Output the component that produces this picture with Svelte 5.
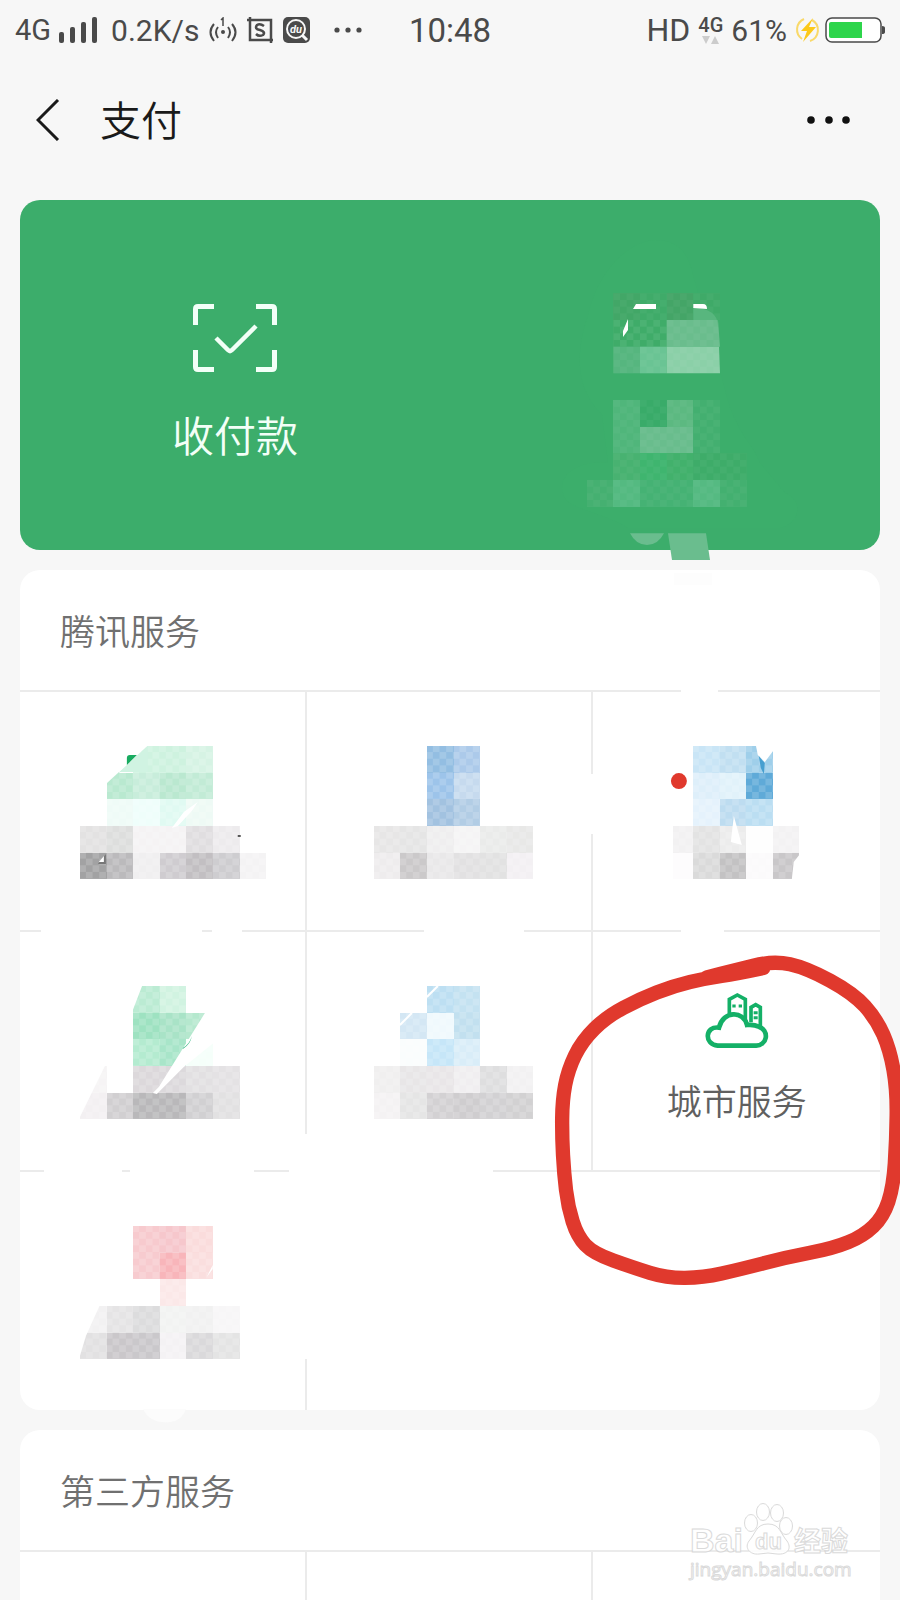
<script>
  // side of one mosaic block
  const unit = 80 / 3;

  // each block is [column, row, colour]
  const heroBlocks = [
    [23, 11, '#42a767'], [24, 11, '#3fab69'], [25, 11, '#44a567'], [26, 11, '#3faa68'],
    [23, 12, '#3fac69'], [24, 12, '#3fac69'],
    [23, 15, '#50b67b'], [24, 15, '#39ab69'], [25, 15, '#5cb981'], [26, 15, '#43af70'],
    [23, 16, '#50b67b'], [24, 16, '#69bd8d'], [25, 16, '#69bd8d'], [26, 16, '#43af70'],
    [23, 17, '#48b271'], [24, 17, '#3fb56f'], [25, 17, '#42b16c'], [26, 17, '#3eac69'], [27, 17, '#3eac69'],
    [22, 18, '#45b071'], [23, 18, '#54ba81'], [24, 18, '#45b274'], [25, 18, '#45b274'], [26, 18, '#55ba82'], [27, 18, '#43b070']
  ];

  const tiles = [
    {
      x: 60,
      blocks: [
        [2, 0, '#cff3e0'], [3, 0, '#cef2df'], [4, 0, '#d6f3e4'],
        [1, 1, '#b9e9d0'], [2, 1, '#c8eddb'], [3, 1, '#bae8d0'], [4, 1, '#c2ebd6'],
        [1, 2, '#effbf7'], [2, 2, '#effefb'], [3, 2, '#e0faf2'], [4, 2, '#eefaf5'],
        [0, 3, '#e3e2e2'], [1, 3, '#dddedd'], [2, 3, '#f5f3f4'], [3, 3, '#f5f3f4'], [4, 3, '#e0dee0'], [5, 3, '#edebed'],
        [0, 4, '#a2a2a3'], [1, 4, '#bbbabc'], [2, 4, '#f0eff0'], [3, 4, '#cfccd0'], [4, 4, '#c2bfc2'], [5, 4, '#cecdd0'], [6, 4, '#f4f3f4']
      ],
      shapes: [
        { d: 'M128 56V82H87V93L128 56Z', fill: '#d0f3e2' },
        { d: 'M87 93V82H100Z', fill: '#b9e9d0' },
        { d: 'M84 50H134L86 94Z', fill: '#fff' },
        { d: 'M107 68Q107 65 110 65H117L107 75Z', fill: '#18ab60' },
        { d: 'M178 112L164 122L152 138L158 136L172 121Z', fill: '#fff' },
        { d: 'M78 174L86 164V174Z', fill: '#777' },
        { d: 'M79 172L84 166V172Z', fill: '#fff' },
        { d: 'M218 145H221V147H218Z', fill: '#555' }
      ]
    },
    {
      x: 66.67,
      blocks: [
        [2, 0, '#93bee2'], [3, 0, '#accaea'], [2, 1, '#9dc4ea'], [3, 1, '#c6daee'], [2, 2, '#a2c2e0'], [3, 2, '#b2cde5'],
        [0, 3, '#e7e6e6'], [1, 3, '#e5e5e5'], [2, 3, '#efeeef'], [3, 3, '#f5f4f5'], [4, 3, '#eaebea'], [5, 3, '#e8e8e7'],
        [0, 4, '#eeeced'], [1, 4, '#cbc9ca'], [2, 4, '#e9e8e9'], [3, 4, '#e2e1e2'], [4, 4, '#e2e2e2'], [5, 4, '#f3f0f3']
      ],
      shapes: []
    },
    {
      x: 80,
      blocks: [
        [0.75, 0, '#c9e5f6'], [1.75, 0, '#c1dff1'], [2.75, 0, '#9fcfea'],
        [0.75, 1, '#deeffa'], [1.75, 1, '#e1f2fa'], [2.75, 1, '#5faad8'],
        [0.75, 2, '#e5f2fc'], [1.75, 2, '#bddcf0'], [2.75, 2, '#bbdef2'],
        [0, 3, '#f2f1f2'], [0.75, 3, '#e3e3e3'], [1.75, 3, '#ececec'], [2.75, 3, '#fefefe'], [3.75, 3, '#f3f2f3'],
        [0, 4, '#fdfcfd'], [0.75, 4, '#dadada'], [1.75, 4, '#c3c2c3'], [2.75, 4, '#fbfafb'], [3.75, 4, '#c9c7c9']
      ],
      shapes: [
        { d: 'M163 55H181V60L172 72L165 65Z', fill: '#fff' },
        { d: 'M166 66L172 73L171 84L168 78Z', fill: '#469fd0' },
        { d: 'M141 126L149 155L138 152Z', fill: '#fff' },
        { d: 'M208 163V190H199L201 172Z', fill: '#fff' },
        { d: 'M78 91a8 8 0 1 0 16 0a8 8 0 1 0 -16 0Z', fill: '#e0392d' }
      ]
    },
    {
      x: 60,
      blocks: [
        [2, 0, '#bbebd3'], [3, 0, '#d1f3e1'],
        [2, 1, '#9ee2c1'], [3, 1, '#a9e3c7'], [4, 1, '#b5e8ce'],
        [2, 2, '#b4ebd0'], [3, 2, '#a8e5c9'], [4, 2, '#f5fffa'],
        [0, 3, '#f6f4f5'], [2, 3, '#dcd8db'], [3, 3, '#dcd9dc'], [4, 3, '#e2e0e2'], [5, 3, '#e4e2e4'],
        [0, 4, '#f3f0f2'], [1, 4, '#d1cfd1'], [2, 4, '#b9b8ba'], [3, 4, '#b9b8ba'], [4, 4, '#d1d0d2'], [5, 4, '#e2e1e2']
      ],
      shapes: [
        { d: 'M112 54H123L113 80Z', fill: '#fff' },
        { d: 'M59 134H86L60 187Z', fill: '#fff' },
        { d: 'M187 80H200V108L164 137L137 164L133 163L139 157Z', fill: '#fff' },
        { d: 'M163 118Q170 114 172 106Q171 114 163 119Z', fill: '#33b780' }
      ]
    },
    {
      x: 66.67,
      blocks: [
        [2, 0, '#bddff2'], [3, 0, '#c4e2f1'],
        [1, 1, '#d4e7f4'], [2, 1, '#f0f9fd'], [3, 1, '#c2e0ef'],
        [1, 2, '#fafdfd'], [2, 2, '#c6e6f8'], [3, 2, '#d9edf8'],
        [0, 3, '#f0efef'], [1, 3, '#e8e6e7'], [2, 3, '#e9e6e8'], [3, 3, '#f0eef0'], [4, 3, '#dededf'], [5, 3, '#f2f1f2'],
        [0, 4, '#f4f2f3'], [1, 4, '#e5e5e5'], [2, 4, '#d3d1d3'], [3, 4, '#cfcdcf'], [4, 4, '#d2d1d3'], [5, 4, '#d2d1d2']
      ],
      shapes: [
        { d: 'M120 67L131 56', stroke: '#fff' },
        { d: 'M93 95L105 83', stroke: '#fff' }
      ]
    },
    { label: '城市服务' },
    {
      x: 60,
      blocks: [
        [2, 0, '#f7cace'], [3, 0, '#f6c7cc'], [4, 0, '#fadcdc'],
        [2, 1, '#f7cbcf'], [3, 1, '#f8b5ba'], [4, 1, '#fadede'],
        [3, 2, '#fbe8e8'],
        [0, 3, '#f2f1f2'], [1, 3, '#e5e4e5'], [2, 3, '#dcdcdd'], [3, 3, '#f2f3f2'], [4, 3, '#f1f1f1'], [5, 3, '#f7f6f7'],
        [0, 4, '#e2e1e2'], [1, 4, '#cac7ca'], [2, 4, '#cac8cb'], [3, 4, '#f4f2f4'], [4, 4, '#dad9db'], [5, 4, '#e4e4e4']
      ],
      shapes: [
        { d: 'M59 135H80L66 166L60 186Z', fill: '#fff' },
        { d: 'M193 95V99L187 107Z', fill: '#fff' }
      ]
    },
    {},
    {}
  ];

  // parts of the grid lines that have been rubbed out
  const erased = [
    [681, 686, 37, 10],
    [588, 774, 10, 60],
    [41, 926, 161, 10],
    [212, 926, 30, 10],
    [424, 926, 100, 10],
    [681, 926, 43, 10],
    [301, 1134, 10, 34],
    [44, 1166, 78, 10],
    [130, 1166, 124, 10],
    [289, 1166, 204, 10],
    [301, 1172, 10, 187],
    [588, 1172, 10, 238]
  ];

  const loop = [
    [670, 84], [590, 101], [500, 114], [400, 138], [300, 177], [200, 230], [126, 303], [84, 390], [67, 480],
    [66, 590], [72, 700], [84, 800], [112, 889], [160, 940], [280, 983], [380, 1014], [490, 1013],
    [600, 988], [740, 952], [880, 925], [970, 888], [1030, 830], [1060, 740], [1069, 600], [1071, 450],
    [1050, 330], [1010, 238], [940, 160], [800, 84], [700, 62], [580, 92], [500, 112]
  ];

  // quadratic curve through the midpoints of the hand-drawn points
  function smooth(points) {
    let d = `M${points[0]}`;
    for (let i = 1; i < points.length - 1; i++) {
      const [x, y] = points[i];
      const [nx, ny] = points[i + 1];
      d += `Q${x} ${y} ${(x + nx) / 2} ${(y + ny) / 2}`;
    }
    return d + `L${points[points.length - 1]}`;
  }
</script>

{#snippet mosaic(blocks, x, y, overlay)}
  <g shape-rendering="crispEdges">
    {#each blocks as [col, row, fill]}
      <rect x={x + col * unit} y={y + row * unit} width={unit} height={unit} {fill} />
      <rect x={x + col * unit} y={y + row * unit} width={unit} height={unit} fill={overlay} />
    {/each}
  </g>
{/snippet}

<div class="page">
  <div class="status">
    <span class="net">4G</span>
    <svg class="bars" width="38" height="26" viewBox="0 0 38 26" fill="#4a4a4a">
      <rect x="0" y="15" width="5" height="11" rx="2" />
      <rect x="11" y="10" width="5" height="16" rx="2" />
      <rect x="22" y="5" width="5" height="21" rx="2" />
      <rect x="33" y="0" width="5" height="26" rx="2" />
    </svg>
    <span class="speed">0.2K/s</span>
    <svg width="28" height="26" viewBox="0 0 28 26" fill="none" stroke="#4a4a4a" stroke-width="2">
      <path d="M5 7Q-2 15 5 24M9 10Q5 15 9 21M23 7Q30 15 23 24M19 10Q23 15 19 21" />
      <path d="M12 3L14 1V9" stroke-width="1.5" />
      <circle cx="14" cy="15" r="2" fill="#4a4a4a" stroke="none" />
    </svg>
    <svg width="26" height="26" viewBox="0 0 26 26" fill="none" stroke="#4a4a4a" stroke-width="2.5">
      <path d="M0 3H24V26M3 0V23H26" />
      <path d="M17 9Q13 6 10 8Q7 12 13 13Q19 15 16 18Q12 20 9 17" />
    </svg>
    <svg width="27" height="26" viewBox="0 0 27 26">
      <rect width="27" height="26" rx="5" fill="#4a4a4a" />
      <circle cx="13" cy="12" r="9" fill="none" stroke="#f7f7f7" stroke-width="2" />
      <path d="M19 18L24 23" stroke="#f7f7f7" stroke-width="3" />
      <text x="13" y="16" text-anchor="middle" class="du">du</text>
    </svg>
    <svg class="more" width="28" height="6" viewBox="0 0 28 6" fill="#4a4a4a">
      <circle cx="3" cy="3" r="2.6" /><circle cx="14" cy="3" r="2.6" /><circle cx="25" cy="3" r="2.6" />
    </svg>
    <span class="clock">10:48</span>
    <span class="right">
      <span class="hd">HD</span>
      <span class="data">
        <span>4G</span>
        <svg width="18" height="8" viewBox="0 0 18 8" fill="#ccc"><path d="M0 0H8L4 8ZM9 8H17L13 0Z" /></svg>
      </span>
      <span class="speed">61%</span>
      <svg class="bolt" width="26" height="26" viewBox="0 0 26 26">
        <path d="M9 2A11.500 11.500 0 0 0 7 22M17 3A11.500 11.500 0 0 1 15 24" fill="none" stroke="#f9d96a" stroke-width="2" />
        <path d="M18 1L6 14H12L8 25L21 10H14Z" fill="#fcc919" />
      </svg>
      <svg width="60" height="26" viewBox="0 0 60 26">
        <rect x="1" y="1" width="55" height="24" rx="6" fill="#fff" stroke="#4a4a4a" stroke-width="1.5" />
        <path d="M6 5H37V21H6Q4 21 4 19V7Q4 5 6 5Z" fill="#2dd54b" />
        <path d="M57 9Q60 9 60 11V15Q60 17 57 17Z" fill="#4a4a4a" />
      </svg>
    </span>
  </div>

  <header>
    <button class="back" aria-label="返回">
      <svg width="24" height="42" viewBox="0 0 24 42" fill="none" stroke="#1a1a1a" stroke-width="3">
        <path d="M22 1L2 21L22 41" />
      </svg>
    </button>
    <h1>支付</h1>
    <button class="menu" aria-label="更多">
      <svg width="44" height="8" viewBox="0 0 44 8" fill="#111">
        <circle cx="4" cy="4" r="3.8" /><circle cx="22" cy="4" r="3.8" /><circle cx="39" cy="4" r="3.8" />
      </svg>
    </button>
  </header>

  <main>
    <section class="hero">
      <button class="pay">
        <svg width="84" height="68" viewBox="0 0 84 68" fill="none" stroke="#f2fff7" stroke-width="5">
          <path d="M2.500 21V5Q2.500 2.500 5 2.500H21M63 2.500H79Q81.500 2.500 81.500 5V21M81.500 46V63Q81.500 65.500 79 65.500H63M21 65.500H5Q2.500 65.500 2.500 63V46" />
          <path d="M23 34L35 46Q37 48 39 46L63 22" stroke-width="4.500" />
        </svg>
        <span>收付款</span>
      </button>
      <div class="half">
        <svg class="smudge" viewBox="450 200 430 350" aria-hidden="true">
          <defs>
            <pattern id="dither" width={unit / 2} height={unit / 2} patternUnits="userSpaceOnUse">
              <rect width={unit / 4} height={unit / 4} fill="#fff" opacity="0.03" />
              <rect x={unit / 4} y={unit / 4} width={unit / 4} height={unit / 4} fill="#fff" opacity="0.03" />
            </pattern>
            <pattern id="dither-light" x="6" y="2" width={unit / 2} height={unit / 2} patternUnits="userSpaceOnUse">
              <rect width={unit / 4} height={unit / 4} fill="#fff" opacity="0.15" />
              <rect x={unit / 4} y={unit / 4} width={unit / 4} height={unit / 4} fill="#fff" opacity="0.15" />
            </pattern>
          </defs>
          <path
            d="M655 240C625 242 597 275 588 315C577 350 573 385 602 415L608 463C578 460 558 475 563 493C565 510 600 510 628 528H780C800 524 804 500 785 493L760 463C754 445 735 433 725 390L693 275C688 250 675 240 655 240Z"
            fill="#3cae6b"
          />
          {@render mosaic(heroBlocks, 0, 0, 'url(#dither)')}
          <path d="M613.300 346.700H640V373.300H613.300Z" fill="#56b67f" />
          <path d="M640 346.700H666.700V373.300H640Z" fill="#6ac494" />
          <path d="M666.700 320H718L720 346.700H666.700Z" fill="#6abd8d" />
          <path d="M693.300 307Q717 309 718 325V320H693.300Z" fill="#58b67e" />
          <path d="M666.700 346.700H719L720 373.300H666.700Z" fill="#8bd0a8" />
          <path d="M613.300 320H718L720 373.300H613.300Z" fill="url(#dither)" />
          <path d="M636 304H656V309H633ZM693.300 304H703Q707 304 707 309L693.300 308ZM628 319V330L623 337V331Z" fill="#fff" />
          <path d="M630 533.300H664Q658 545 647 545Q636 545 630 533.300Z" fill="#6abd8e" />
          <path d="M668 533.300H706L710 560H672Z" fill="#6abd8e" />
          <path d="M674 573H712V585H674Z" fill="#fdfdfd" />
        </svg>
      </div>
    </section>

    <section class="card">
      <h2>腾讯服务</h2>
      <div class="grid">
        {#each tiles as tile}
          {#if tile.label}
            <button class="tile">
              <svg width="64" height="58" viewBox="492 160 192 172" fill="none" stroke="#14b067" stroke-width="11">
                <path d="M565 224V181L589 168L613 181V255M630 250V205L644 197L658 205V262" />
                <path
                  d="M530 320H644A29 29 0 0 0 653 263Q640 256 618 258C608 214 546 214 534 266C492 260 488 316 530 320Z"
                  fill="#fff"
                  stroke-width="14"
                />
                <path d="M574 201H584M593 201H603M638 221H650M638 236H650" stroke-width="9" />
                <path d="M618 250V262" stroke-width="9" />
              </svg>
              <span>{tile.label}</span>
            </button>
          {:else}
            <div class="tile">
              {#if tile.blocks}
                <svg class="art" viewBox="0 0 287 240" aria-hidden="true">
                  {@render mosaic(tile.blocks, tile.x, 56, 'url(#dither-light)')}
                  {#each tile.shapes as s}
                    <path d={s.d} fill={s.fill ?? 'none'} stroke={s.stroke} stroke-width="2" />
                  {/each}
                </svg>
              {/if}
            </div>
          {/if}
        {/each}
      </div>
      <svg class="marks" viewBox="20 570 860 840" aria-hidden="true">
        {#each erased as [x, y, width, height]}
          <rect {x} {y} {width} {height} fill="#fff" />
        {/each}
        <path d="M143 1409H186Q182 1421 170 1422Q150 1424 143 1409Z" fill="#fcfcfc" />
        <path
          d={smooth(loop)}
          transform="translate(540 940) scale(0.33333)"
          fill="none"
          stroke="#e0392d"
          stroke-width="43"
          stroke-linejoin="round"
          stroke-linecap="round"
        />
      </svg>
    </section>

    <section class="card">
      <h2>第三方服务</h2>
      <div class="grid">
        <div class="tile"></div>
        <div class="tile"></div>
        <div class="tile"></div>
      </div>
    </section>
  </main>

  <svg class="watermark" width="170" height="90" viewBox="0 0 170 90">
    <g fill="#fff" stroke="#d4d4d4" stroke-width="1">
      <text x="0" y="49" class="brand">Bai</text>
      <ellipse cx="61" cy="20" rx="6.500" ry="8.500" />
      <ellipse cx="73" cy="9" rx="6.500" ry="8.500" />
      <ellipse cx="87" cy="10" rx="6.500" ry="8.500" />
      <ellipse cx="96" cy="23" rx="6.500" ry="8.500" />
      <path d="M78 21C66 21 66 30 59 38C54 45 60 52 69 51Q78 49 87 51C98 52 102 45 97 38C90 30 90 21 78 21Z" />
      <text x="65" y="46" class="paw">du</text>
      <text x="104" y="48" class="exp">经验</text>
      <text x="0" y="73" class="site">jingyan.baidu.com</text>
    </g>
  </svg>
</div>

<style>
  :global(body) {
    margin: 0;
    background: #f7f7f7;
  }

  .page {
    position: relative;
    height: 100vh;
    overflow: hidden;
    background: #f7f7f7;
    font-family: Roboto, 'Noto Sans CJK SC', sans-serif;
  }

  svg {
    display: block;
    flex: none;
  }

  button {
    margin: 0;
    padding: 0;
    border: 0;
    background: none;
    font: inherit;
    color: inherit;
    cursor: pointer;
  }

  .status {
    position: relative;
    display: flex;
    align-items: center;
    height: 60px;
    padding: 0 15px;
    color: #4a4a4a;
    gap: 10px;
  }

  .net {
    font-size: 29px;
    margin-right: -2px;
  }

  .speed {
    font-size: 30px;
  }

  .bars {
    margin-right: 4px;
  }

  .du {
    font: italic 700 11px Roboto, sans-serif;
    fill: #f7f7f7;
  }

  .more {
    margin-left: 14px;
  }

  .clock {
    position: absolute;
    left: 50%;
    transform: translateX(-50%);
    font-size: 33px;
  }

  .right {
    display: flex;
    align-items: center;
    gap: 8px;
    margin-left: auto;
  }

  .bolt {
    margin-right: -4px;
  }

  .hd {
    font-size: 32px;
    -webkit-text-stroke: 1px #4a4a4a;
    -webkit-text-stroke-width: 0;
  }

  .data {
    display: flex;
    flex-direction: column;
    align-items: center;
    gap: 2px;
    font-size: 20px;
    line-height: 18px;
    font-weight: 500;
  }

  header {
    display: flex;
    align-items: center;
    height: 120px;
    padding: 0 49px 0 36px;
  }

  h1 {
    margin: 0 0 0 40px;
    padding-top: 4px;
    font-size: 41px;
    line-height: 60px;
    font-weight: 350;
    color: #1a1a1a;
  }

  .menu {
    margin-left: auto;
  }

  main {
    display: flex;
    flex-direction: column;
    gap: 20px;
    padding: 20px;
  }

  .hero {
    display: flex;
    height: 350px;
    border-radius: 20px;
    background: #3cad6b;
  }

  .pay,
  .half {
    position: relative;
    flex: 1;
  }

  .pay {
    display: flex;
    flex-direction: column;
    align-items: center;
    gap: 36px;
    padding-top: 22px;
    color: #f2fff7;
    font-size: 42px;
    line-height: 60px;
    font-weight: 350;
    justify-content: center;
  }

  .smudge,
  .marks {
    position: absolute;
    inset: 0;
    width: 100%;
    height: 100%;
    z-index: 1;
    overflow: visible;
    pointer-events: none;
  }

  .card {
    position: relative;
    border-radius: 20px;
    background: #fff;
  }

  h2 {
    margin: 0;
    padding: 8px 40px 0;
    font-size: 35px;
    line-height: 112px;
    font-weight: 350;
    color: #707070;
  }

  .grid {
    display: grid;
    grid-template-columns: repeat(3, 1fr);
  }

  .tile {
    box-sizing: border-box;
    height: 240px;
    border-top: 2px solid #ebebeb;
    border-right: 2px solid #ebebeb;
  }

  .tile:nth-child(3n) {
    border-right: 0;
  }

  button.tile {
    display: flex;
    flex-direction: column;
    align-items: center;
    gap: 34px;
    padding-top: 60px;
    font-size: 35px;
    line-height: 40px;
    font-weight: 350;
    color: #606060;
  }

  /* covers the tile's borders too */
  .art {
    width: calc(100% + 2px);
    height: 240px;
    margin-top: -2px;
  }

  .tile:nth-child(3n) .art {
    width: 100%;
  }

  .watermark {
    position: absolute;
    right: 40px;
    bottom: 7px;
    opacity: 0.85;
    overflow: visible;
  }

  .brand {
    font: 700 34px 'Liberation Sans', sans-serif;
  }

  .paw {
    font: 700 22px 'Liberation Sans', sans-serif;
  }

  .exp {
    font: 700 27px 'Noto Sans CJK SC', sans-serif;
  }

  .site {
    font: 400 19px 'Open Sans', sans-serif;
  }
</style>
